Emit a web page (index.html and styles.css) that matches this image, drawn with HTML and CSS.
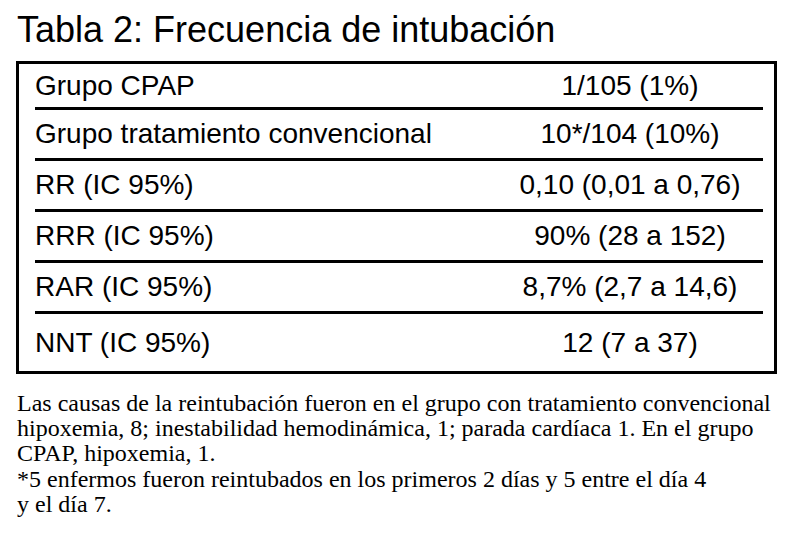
FILE: index.html
```html
<!DOCTYPE html>
<html lang="es">
<head>
<meta charset="utf-8">
<link rel="stylesheet" href="styles.css">
</head>
<body>
<div class="page">
  <h1 class="title">Tabla 2: Frecuencia de intubación</h1>
  <div class="table">
    <div class="row"><span class="label">Grupo CPAP</span><span class="value">1/105 (1%)</span></div>
    <div class="row"><span class="label">Grupo tratamiento convencional</span><span class="value">10*/104 (10%)</span></div>
    <div class="row"><span class="label">RR (IC 95%)</span><span class="value">0,10 (0,01 a 0,76)</span></div>
    <div class="row"><span class="label">RRR (IC 95%)</span><span class="value">90% (28 a 152)</span></div>
    <div class="row"><span class="label">RAR (IC 95%)</span><span class="value">8,7% (2,7 a 14,6)</span></div>
    <div class="row last"><span class="label">NNT (IC 95%)</span><span class="value">12 (7 a 37)</span></div>
  </div>
  <p class="note">Las causas de la reintubación fueron en el grupo con tratamiento convencional<br>hipoxemia, 8; inestabilidad hemodinámica, 1; parada cardíaca 1. En el grupo<br>CPAP, hipoxemia, 1.<br>*5 enfermos fueron reintubados en los primeros 2 días y 5 entre el día 4<br>y el día 7.</p>
</div>
</body>
</html>
```

FILE: styles.css
```css
html, body {
  margin: 0;
  padding: 0;
  background: #fff;
}
.page {
  width: 787px;
  height: 533px;
  overflow: hidden;
  color: #000;
}
.title {
  margin: 0;
  padding: 10px 0 0 17px;
  font-family: "Liberation Sans", Arial, sans-serif;
  font-weight: normal;
  font-size: 36px;
  line-height: 40px;
  height: 51px;
  box-sizing: border-box;
  white-space: nowrap;
}
.table {
  margin: 10px 0 0 16px;
  width: 761px;
  height: 313px;
  box-sizing: border-box;
  border: 3px solid #000;
  padding: 0 11px 0 16px;
  font-family: "Liberation Sans", Arial, sans-serif;
  font-size: 28px;
}
.row {
  display: grid;
  grid-template-columns: 462px 1fr;
  align-items: center;
  height: 51px;
  box-sizing: border-box;
  border-bottom: 3px solid #000;
}
.row:first-child {
  height: 46px;
}
.row.last {
  border-bottom: none;
  height: 58px;
}
.label {
  white-space: nowrap;
}
.value {
  text-align: center;
  white-space: nowrap;
}
.note {
  margin: 17px 0 0 17px;
  font-family: "Liberation Serif", "Times New Roman", serif;
  font-size: 24px;
  line-height: 25.2px;
  white-space: nowrap;
}
```
